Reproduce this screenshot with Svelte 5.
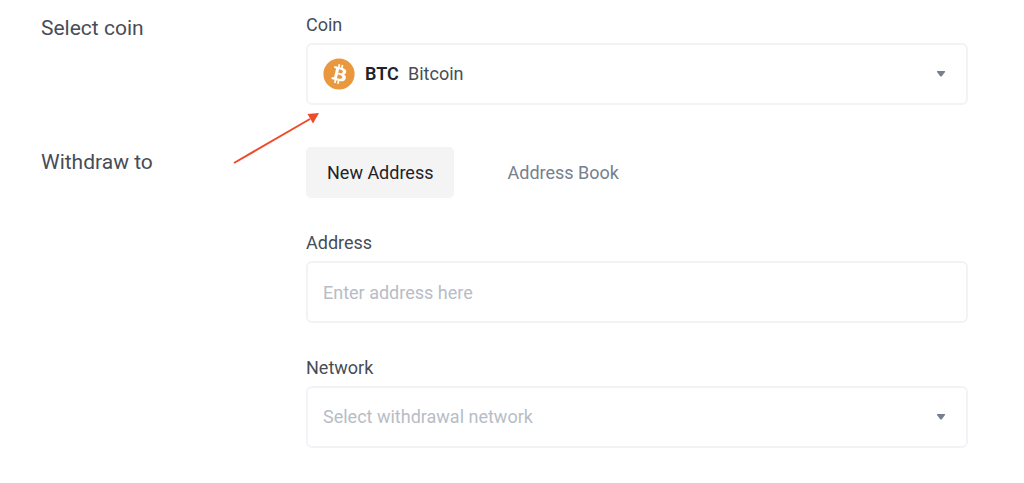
<script>
  let coin = "BTC";
  let target = "new";
  let address = "";
  let network = "";

  const coins = [{ symbol: "BTC", name: "Bitcoin" }];
  const networks = ["BTC", "BNB Smart Chain", "Ethereum"];
</script>

<form class="withdraw" on:submit|preventDefault>
  <section class="row">
    <h2>Select coin</h2>
    <div class="fields">
      <div class="field">
        <label for="coin">Coin</label>
        <div class="control">
          <select id="coin" class="box with-coin" bind:value={coin}>
            {#each coins as c}
              <option value={c.symbol}>{c.name}</option>
            {/each}
          </select>
          <span class="coin">
            <svg width="32" height="32" viewBox="0 0 32 32" aria-hidden="true">
              <circle cx="16" cy="16" r="15.6" fill="#e9983d" />
              <path
                fill="#fff"
                d="M23.189 14.02c.314-2.096-1.283-3.223-3.465-3.975l.708-2.84-1.728-.43-.69 2.765c-.454-.114-.92-.22-1.385-.326l.695-2.783L15.596 6l-.708 2.839c-.376-.086-.746-.17-1.104-.26l.002-.009-2.384-.595-.46 1.846s1.283.294 1.256.312c.7.175.826.638.805 1.006l-.806 3.235c.048.012.11.03.18.057l-.183-.045-1.13 4.532c-.086.212-.303.531-.793.41.018.025-1.256-.313-1.256-.313l-.858 1.978 2.25.561c.418.105.828.215 1.231.318l-.715 2.872 1.727.43.708-2.84c.472.127.93.245 1.378.357l-.706 2.828 1.728.43.715-2.866c2.948.558 5.164.333 6.097-2.333.752-2.146-.037-3.385-1.588-4.192 1.13-.26 1.98-1.003 2.207-2.538zm-3.95 5.538c-.533 2.147-4.148.986-5.32.695l.95-3.805c1.172.293 4.929.872 4.37 3.11zm.535-5.569c-.487 1.953-3.495.96-4.47.717l.86-3.45c.975.243 4.118.696 3.61 2.733z"
              />
            </svg>
            <b>{coin}</b>
          </span>
          <svg class="caret" width="10" height="6" viewBox="0 0 10 6" aria-hidden="true">
            <path d="M1.500 0h7q.9 0 .5 1L6 5q-1 1-2 0L1 1Q.6 0 1.500 0z" fill="#76808f" />
          </svg>
        </div>

        <!-- Pointer to the coin selector -->
        <svg class="arrow" width="88" height="52" viewBox="0 0 88 52" aria-hidden="true">
          <path d="M2 51L78 7" stroke="#ee4b2b" stroke-width="2" />
          <path d="M87 1L75.500 2L81 11.500z" fill="#ee4b2b" />
        </svg>
      </div>
    </div>
  </section>

  <section class="row">
    <h2>Withdraw to</h2>
    <div class="fields">
      <div class="tabs">
        <button
          type="button"
          class:active={target === "new"}
          on:click={() => (target = "new")}>New Address</button
        >
        <button
          type="button"
          class:active={target === "book"}
          on:click={() => (target = "book")}>Address Book</button
        >
      </div>

      <div class="field">
        <label for="address">Address</label>
        <input
          id="address"
          class="box"
          type="text"
          placeholder="Enter address here"
          bind:value={address}
        />
      </div>

      <div class="field">
        <label for="network">Network</label>
        <div class="control">
          <select
            id="network"
            class="box"
            class:empty={!network}
            bind:value={network}
          >
            <option value="" disabled hidden>Select withdrawal network</option>
            {#each networks as n}
              <option value={n}>{n}</option>
            {/each}
          </select>
          <svg class="caret" width="10" height="6" viewBox="0 0 10 6" aria-hidden="true">
            <path d="M1.500 0h7q.9 0 .5 1L6 5q-1 1-2 0L1 1Q.6 0 1.500 0z" fill="#76808f" />
          </svg>
        </div>
      </div>
    </div>
  </section>
</form>

<style>
  :global(body) {
    margin: 0;
    background: #fff;
  }

  .withdraw {
    display: flex;
    flex-direction: column;
    gap: 42px;
    padding: 13px 56px 35px 41px;
    font-family: Roboto, "Liberation Sans", sans-serif;
    font-size: 18px;
    line-height: 24px;
    color: #474d57;
  }

  .row {
    display: grid;
    grid-template-columns: 265px 1fr;
  }

  h2 {
    margin: 0;
    font-size: 21px;
    font-weight: 400;
    line-height: 30px;
  }

  .fields {
    display: flex;
    flex-direction: column;
    gap: 33px;
    min-width: 0;
  }

  .field {
    position: relative;
    display: flex;
    flex-direction: column;
    gap: 6px;
  }

  .control {
    display: grid;
    align-items: center;
  }

  /* Select, coin badge and caret share one cell */
  .control > * {
    grid-area: 1 / 1;
  }

  .box {
    box-sizing: border-box;
    width: 100%;
    height: 62px;
    padding: 0 15px;
    border: 2px solid #f2f3f6;
    border-radius: 6px;
    background: #fff;
    color: #474d57;
    font: inherit;
    appearance: none;
    outline: none;
  }

  .box:focus-visible {
    border-color: #f0b90b;
  }

  .box::placeholder {
    color: #b7bdc6;
    opacity: 1;
  }

  .box.empty {
    color: #b7bdc6;
  }

  .with-coin {
    padding-left: 100px;
  }

  .coin {
    display: flex;
    align-items: center;
    gap: 10px;
    margin-left: 17px;
    pointer-events: none;
  }

  .coin b {
    color: #1e2329;
    font-weight: 600;
  }

  .caret {
    justify-self: end;
    margin-right: 22px;
    pointer-events: none;
  }

  .arrow {
    position: absolute;
    top: calc(100% + 7px);
    left: -74px;
    pointer-events: none;
  }

  .tabs {
    display: flex;
    gap: 32px;
  }

  .tabs button {
    height: 51px;
    padding: 0 21px;
    border: 0;
    border-radius: 5px;
    background: none;
    color: #76808f;
    font: inherit;
    cursor: pointer;
  }

  .tabs .active {
    background: #f4f4f4;
    color: #1e2329;
  }
</style>
